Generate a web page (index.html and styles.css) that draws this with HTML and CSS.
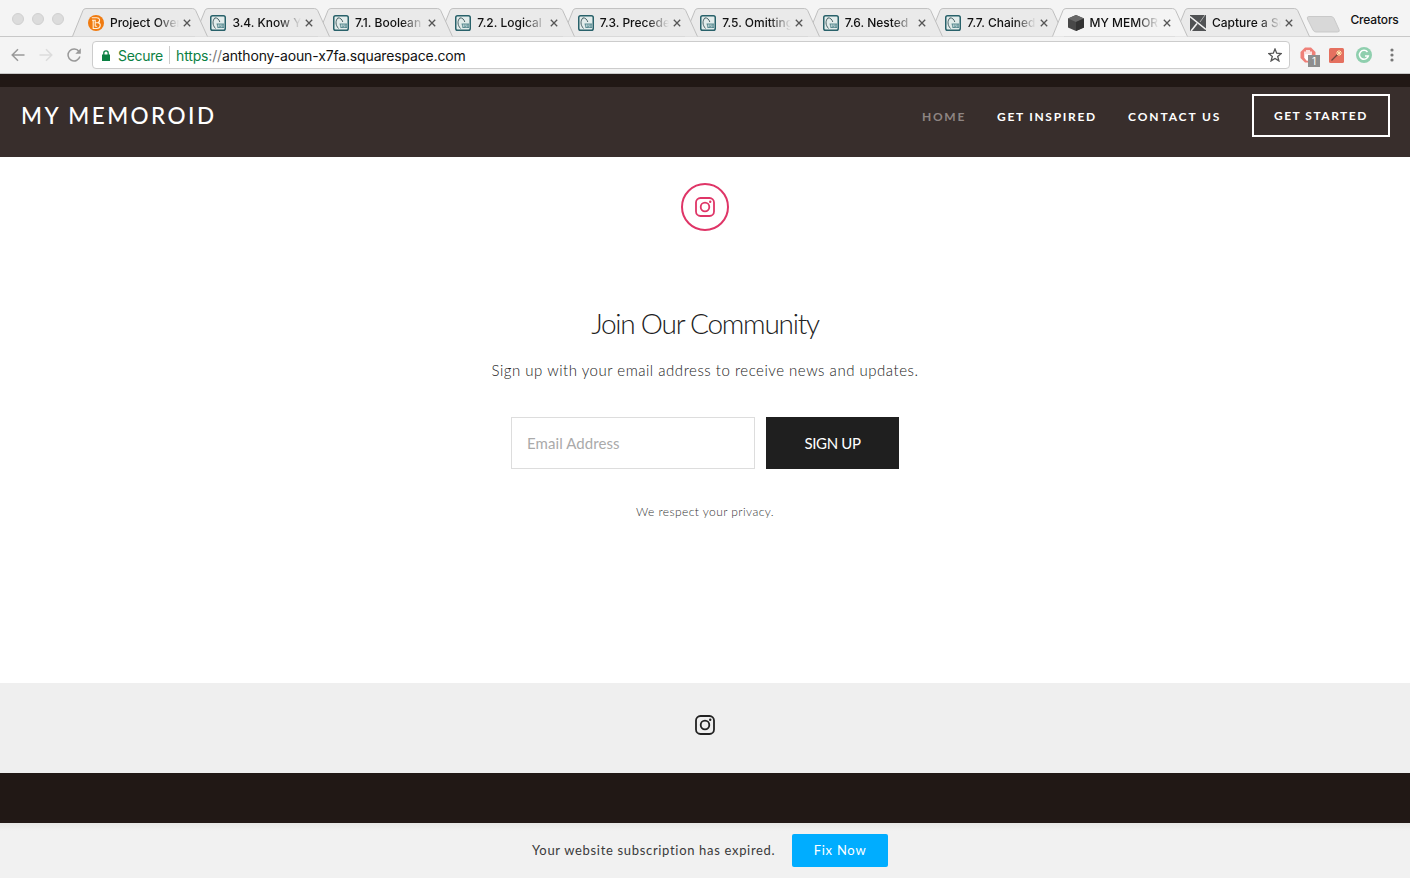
FILE: index.html
```html
<!DOCTYPE html>
<html lang="en">
<head>
<meta charset="utf-8">
<title>My Memoroid</title>
<link rel="stylesheet" href="styles.css">
</head>
<body>
<svg class="defs" width="0" height="0">
  <symbol id="tab" viewBox="0 0 137 29"><path d="M.5 28.5L11 2.500Q11.800.5 14 .5H121Q123.300.5 124.200 2.500L136 28.500"/></symbol>
  <symbol id="x" viewBox="0 0 8 8"><path d="M.8.800 7.200 7.200M7.200.800.800 7.200" fill="none" stroke="#555" stroke-width="1.300"/></symbol>
  <symbol id="rsi" viewBox="0 0 16 16"><rect x=".75" y=".75" width="14.500" height="14.500" rx="1.800" fill="#e2eceb" stroke="#28616a" stroke-width="1.500"/><path d="M5 2.800C2.300 5.500 2.300 10 5.500 13.500M4.800 3c2.500-.5 4.200 1.500 5 4" fill="none" stroke="#3a5358" stroke-width=".9"/><path d="M6.500 8.500H14V13H7.500z" fill="#5b8c92"/><path d="M8.300 12V9.700h1v1H8.300L9.500 12M11.700 9.700H10.500v1h1.100V12h-1.100M13 9.500V12" fill="none" stroke="#e4f0f0" stroke-width=".5"/></symbol>
  <symbol id="insta" viewBox="0 0 20 20"><rect x="1" y="1" width="18" height="18" rx="4.500" fill="none" stroke="currentColor" stroke-width="1.800"/><circle cx="10" cy="10" r="4.300" fill="none" stroke="currentColor" stroke-width="1.800"/><circle cx="15.200" cy="4.800" r="1.200" fill="currentColor"/></symbol>
</svg>

<div class="browser">
  <div class="tabstrip">
    <div class="lights"><i></i><i></i><i></i></div>
    <div class="tabs">
      <div class="tab t1"><svg class="shape"><use href="#tab"/></svg><svg class="fav" viewBox="0 0 16 16"><circle cx="8" cy="8" r="8" fill="#f07b10"/><path d="M3.800 2.700h5c3.400 0 3.600 3.800 1.300 4.900 3.400 1 2.600 5.900-1.200 5.900H5.200V5.500M7.200 11.500V5.200H4M7.200 7.700h2.500M7.200 11.300h2" fill="none" stroke="#fff0d8" stroke-width="1.100"/></svg><span class="label">Project Over</span><svg class="close"><use href="#x"/></svg></div>
      <div class="tab t2"><svg class="shape"><use href="#tab"/></svg><svg class="fav"><use href="#rsi"/></svg><span class="label">3.4. Know Yo</span><svg class="close"><use href="#x"/></svg></div>
      <div class="tab t3"><svg class="shape"><use href="#tab"/></svg><svg class="fav"><use href="#rsi"/></svg><span class="label">7.1. Boolean</span><svg class="close"><use href="#x"/></svg></div>
      <div class="tab t4"><svg class="shape"><use href="#tab"/></svg><svg class="fav"><use href="#rsi"/></svg><span class="label">7.2. Logical</span><svg class="close"><use href="#x"/></svg></div>
      <div class="tab t5"><svg class="shape"><use href="#tab"/></svg><svg class="fav"><use href="#rsi"/></svg><span class="label">7.3. Precede</span><svg class="close"><use href="#x"/></svg></div>
      <div class="tab t6"><svg class="shape"><use href="#tab"/></svg><svg class="fav"><use href="#rsi"/></svg><span class="label">7.5. Omitting</span><svg class="close"><use href="#x"/></svg></div>
      <div class="tab t7"><svg class="shape"><use href="#tab"/></svg><svg class="fav"><use href="#rsi"/></svg><span class="label">7.6. Nested</span><svg class="close"><use href="#x"/></svg></div>
      <div class="tab t8"><svg class="shape"><use href="#tab"/></svg><svg class="fav"><use href="#rsi"/></svg><span class="label">7.7. Chained</span><svg class="close"><use href="#x"/></svg></div>
      <div class="tab active"><svg class="shape"><use href="#tab"/></svg><svg class="fav" viewBox="0 0 16 16"><path d="M8 0l8 3.500v9L8 16l-8-3.500v-9z" fill="#484848"/><path d="M8 0l8 3.500L8 7 0 3.500z" fill="#686868"/><path d="M8 7l8-3.500v9L8 16z" fill="#333"/></svg><span class="label">MY MEMOR</span><svg class="close"><use href="#x"/></svg></div>
      <div class="tab t10"><svg class="shape"><use href="#tab"/></svg><svg class="fav" viewBox="0 0 16 16"><path d="M0 0h16v16H0z" fill="#505254"/><path d="M0 1.500l16 13M1 16 7 8.500" stroke="#f1f1f1" stroke-width="1.600"/><path d="M10 7l5-7" stroke="#c4c5c6" stroke-width=".8"/></svg><span class="label">Capture a Sc</span><svg class="close"><use href="#x"/></svg></div>
    </div>
    <svg class="newtab" viewBox="0 0 34 17"><path d="M3 .5h22q2 0 3 2l5 11q1 2.500-1.500 2.500H10q-2 0-3-2L1.500 3Q.5.500 3 .5z" fill="#d8d8d8" stroke="#c9c9c9"/></svg>
    <span class="profile">Creators</span>
  </div>

  <div class="toolbar">
    <svg class="nav back" viewBox="0 0 14 14"><path d="M13.500 7H1.500M7 1.200 1.200 7 7 12.800" fill="none" stroke="#999" stroke-width="1.500"/></svg>
    <svg class="nav fwd" viewBox="0 0 14 14"><path d="M.5 7h12M7 1.200 12.800 7 7 12.800" fill="none" stroke="#dcdcdc" stroke-width="1.500"/></svg>
    <svg class="nav reload" viewBox="0 0 14 14"><path d="M12 3.500A6 6 0 1 0 12.900 8.500" fill="none" stroke="#999" stroke-width="1.500"/><path d="M13.800.300v5.500H8.300z" fill="#999"/></svg>
    <div class="omnibox">
      <svg class="lock" viewBox="0 0 8 11"><path d="M0 4.500h8V11H0z" fill="#0b8043"/><path d="M1.800 5V3a2.200 2.200 0 0 1 4.400 0v2" fill="none" stroke="#0b8043" stroke-width="1.300"/></svg>
      <span class="secure">Secure</span>
      <span class="url"><b>https</b><i>://</i>anthony-aoun-x7fa.squarespace.com</span>
      <svg class="star" viewBox="0 0 14 14"><path d="M7 1l1.700 4.200 4.500.3-3.500 2.900 1.200 4.500L7 10.400l-3.900 2.500 1.200-4.500L.8 5.500l4.500-.3z" fill="none" stroke="#555" stroke-width="1.300"/></svg>
    </div>
    <div class="ext block"><svg viewBox="0 0 16 16"><path d="M5 .5h6L15.500 5v6L11 15.500H5L.5 11V5z" fill="#ef8078"/><path d="M5 8V4.500M7 8V3M9 8V3M11 9V4.500M5 8h6v2.500L9.500 13H7L5 10.500z" fill="#fff" stroke="#fff" stroke-width="1.500"/></svg><span class="badge">1</span></div>
    <svg class="ext wand" viewBox="0 0 15 15"><rect width="15" height="15" rx="1.500" fill="#e5705f"/><path d="M2.500 12.500 9 6" stroke="#6d453c" stroke-width="1.300"/><path d="M10 2v6M7 5h6M8 3l4 4M12 3 8 7" stroke="#ffe9b0" stroke-width="1"/></svg>
    <svg class="ext gram" viewBox="0 0 16 16"><circle cx="8" cy="8" r="8" fill="#8fcfae"/><path d="M11.500 5A4.500 4.500 0 1 0 12.300 9H9" fill="none" stroke="#fff" stroke-width="1.500"/></svg>
    <svg class="dots" viewBox="0 0 4 14"><circle cx="2" cy="2" r="1.600"/><circle cx="2" cy="7" r="1.600"/><circle cx="2" cy="12" r="1.600"/></svg>
  </div>
</div>

<header class="site-header">
  <h1 class="logo">MY MEMOROID</h1>
  <nav class="menu">
    <a class="home">HOME</a>
    <a class="inspired">GET INSPIRED</a>
    <a class="contact">CONTACT US</a>
    <a class="cta"><span>GET STARTED</span></a>
  </nav>
</header>

<main class="content">
  <div class="circle"><svg><use href="#insta"/></svg></div>
  <h2>Join Our Community</h2>
  <p class="lead">Sign up with your email address to receive news and updates.</p>
  <form class="signup">
    <div class="field">Email Address</div>
    <div class="submit">SIGN UP</div>
  </form>
  <p class="privacy">We respect your privacy.</p>
</main>

<footer class="social"><svg><use href="#insta"/></svg></footer>
<div class="dark"></div>
<div class="notice"><span class="expired">Your website subscription has expired.</span><a class="fix">Fix Now</a></div>
</body>
</html>
```
FILE: styles.css
```css
* { box-sizing: border-box; }
body { margin: 0; width: 1410px; height: 878px; overflow: hidden; display: flex; flex-direction: column; background: #fff; font-family: Lato, sans-serif; }
.defs { position: absolute; }
svg { display: block; flex: none; }

/* browser chrome */
.browser { height: 74px; flex: none; background: #f4f4f4; font-family: Inter, sans-serif; border-bottom: 1px solid #c8c8c8; }
.tabstrip { height: 37px; display: flex; border-bottom: 1px solid #c8c8c8; border-radius: 5px 5px 0 0; }
.lights { display: flex; gap: 8px; padding: 13px 0 0 12px; width: 72px; flex: none; }
.lights i { width: 12px; height: 12px; border-radius: 50%; background: #dcdcdc; border: 1px solid #d0d0d0; }
.tabs { display: flex; padding-top: 8px; height: 37px; flex: none; }
.tab { position: relative; width: 136.440px; height: 29px; margin-right: -14px; padding-left: 16px; display: flex; align-items: center; flex: none; }
.tab:last-child { margin-right: 0; }
.shape { position: absolute; left: 0; top: 0; width: 136.440px; height: 29px; z-index: 0; fill: #eaeaea; stroke: #bebebe; }
.active .shape { fill: #f4f4f4; }
.t1 { z-index: 9; } .t2 { z-index: 8; } .t3 { z-index: 7; } .t4 { z-index: 6; } .t5 { z-index: 5; }
.t6 { z-index: 4; } .t7 { z-index: 3; } .t8 { z-index: 2; } .active { z-index: 10; } .t10 { z-index: 1; }
.fav { width: 16px; height: 16px; z-index: 1; }
.label { z-index: 1; margin-left: 6px; width: 69px; white-space: nowrap; font-size: 12px; line-height: 18px; font-weight: 500; color: #111; -webkit-mask-image: linear-gradient(90deg, #000 68%, transparent 100%); mask-image: linear-gradient(90deg, #000 68%, transparent 100%); }
.close { width: 8px; height: 8px; margin-left: 4px; z-index: 1; }
.newtab { width: 34px; height: 17px; margin: 16px 0 0 -4px; }
.profile { margin: 11px 0 0 10px; font-size: 12px; line-height: 18px; font-weight: 500; letter-spacing: -.15px; color: #111; }
.toolbar { height: 36px; display: flex; align-items: center; }
.nav { width: 14px; height: 14px; }
.back { margin-left: 11px; } .fwd { margin-left: 14px; } .reload { margin-left: 14px; }
.omnibox { width: 1198px; height: 28px; margin-left: 11px; background: #fff; border: 1px solid #ccc; border-radius: 4px; display: flex; align-items: center; font-size: 14px; }
.lock { width: 8px; height: 11px; margin-left: 9px; }
.secure { margin-left: 8px; width: 52px; height: 18px; line-height: 19px; letter-spacing: -.3px; color: #0b8043; border-right: 1px solid #ccc; }
.url { margin-left: 6px; line-height: 18px; padding-top: 1px; letter-spacing: -.15px; color: #111; }
.url b { font-weight: 400; color: #0b8043; } .url i { font-style: normal; color: #777; }
.star { width: 14px; height: 14px; margin: 0 7px 0 auto; }
.ext { width: 16px; height: 16px; flex: none; }
.block { position: relative; margin-left: 10px; }
.badge { position: absolute; left: 8px; top: 8px; width: 12px; height: 12px; background: #8e8e8e; color: #fff; font-size: 10px; line-height: 12px; text-align: center; }
.wand { width: 15px; height: 15px; margin-left: 13px; } .gram { margin-left: 12px; }
.dots { width: 4px; height: 14px; margin-left: 18px; fill: #777; }

/* site header */
.site-header { height: 83px; flex: none; display: flex; justify-content: space-between; background: #382e2c; border-top: 13px solid #211815; color: #fff; }
.logo { margin: 14px 0 0 21px; font-size: 22.500px; line-height: 30px; font-weight: 500; letter-spacing: 2.450px; }
.menu { display: flex; padding: 7px 20px 0 0; font-size: 12px; font-weight: 700; }
.menu a { line-height: 46px; letter-spacing: 1.700px; white-space: nowrap; }
.home { width: 75px; color: #8e8582; } .inspired { width: 131px; } .menu .contact { width: 124px; letter-spacing: 1.900px; }
.menu .cta { width: 138px; height: 43px; border: 2px solid #fff; padding-left: 20px; line-height: 40px; letter-spacing: 1.500px; }

/* content */
.content { height: 526px; flex: none; display: flex; flex-direction: column; align-items: center; padding-top: 26px; }
.circle { width: 48px; height: 48px; border: 2px solid #df3567; border-radius: 50%; display: flex; align-items: center; justify-content: center; color: #df3567; }
.circle svg { width: 20px; height: 20px; }
h2 { margin: 72px 0 0; font-size: 28px; line-height: 40px; font-weight: 300; letter-spacing: -1.250px; color: #222; white-space: nowrap; }
.lead { margin: 16px 0 0; font-size: 15px; line-height: 22px; font-weight: 300; color: #222; letter-spacing: .52px; white-space: nowrap; }
.signup { margin: 36px 0 0; display: flex; gap: 11px; }
.field { width: 244px; height: 52px; border: 1px solid #ddd; padding-left: 15px; line-height: 51px; font-size: 15px; letter-spacing: .08px; color: #aaa; }
.submit { width: 133px; height: 52px; background: #1f1f1f; color: #fff; font-size: 15px; line-height: 53px; text-align: center; letter-spacing: -.35px; }
.privacy { margin: 34px 0 0; font-size: 12px; line-height: 18px; font-weight: 300; color: #333; letter-spacing: .43px; }

/* bottom */
.social { height: 90px; flex: none; background: #efefef; display: flex; justify-content: center; padding-top: 32px; color: #222; }
.social svg { width: 20px; height: 20px; }
.dark { height: 50px; flex: none; background: #211815; }
.notice { height: 55px; flex: none; background: linear-gradient(#e6e6e4, #f1f1f1 8px); display: flex; align-items: center; padding-left: 532px; font-size: 13px; color: #3a3a3a; }
.expired { width: 260px; white-space: nowrap; letter-spacing: .68px; padding-bottom: 1px; }
.fix { width: 96px; height: 33px; border-radius: 2px; background: #00adff; color: #fff; line-height: 33px; text-align: center; letter-spacing: .75px; }
```
